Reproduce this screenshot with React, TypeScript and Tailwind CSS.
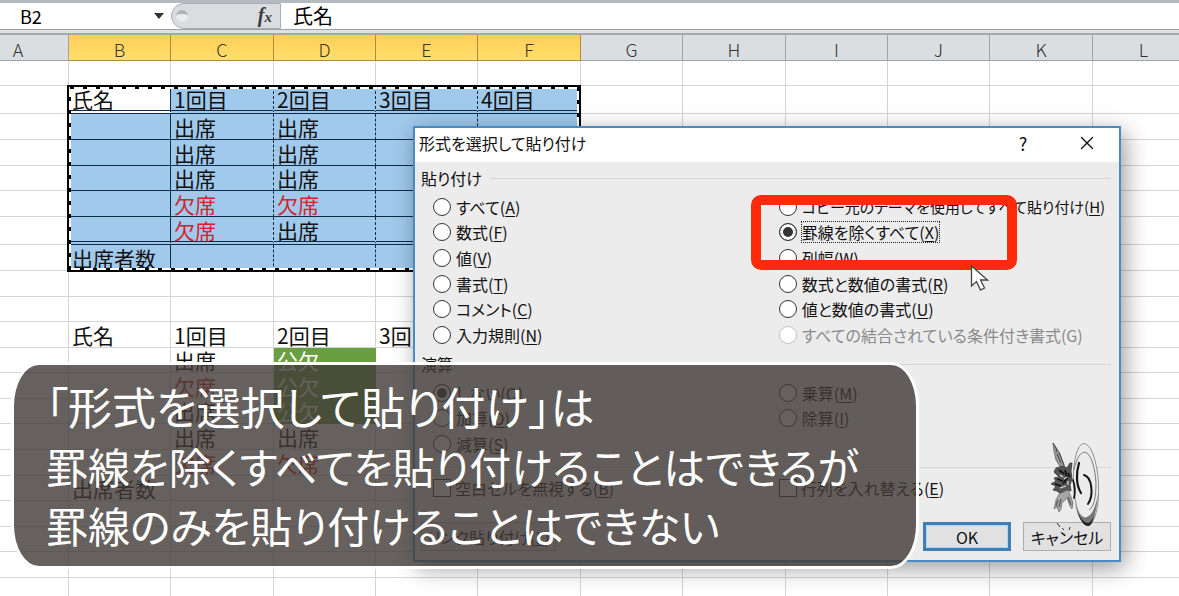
import React, { useState } from 'react';
import { X } from 'lucide-react';

const COLUMNS = ['A', 'B', 'C', 'D', 'E', 'F', 'G', 'H', 'I', 'J', 'K', 'L'];
const COLUMN_WIDTHS = [69, 102, 103, 102, 102, 103, 102, 103, 102, 102, 103, 102];
const SELECTED_COLUMNS = 'BCDEF';

const ROWS: { height: number; cells?: string[] }[] = [
  { height: 25 },
  { height: 28, cells: ['', '氏名', '1回目', '2回目', '3回目', '4回目'] },
  { height: 26, cells: ['', '', '出席', '出席'] },
  { height: 26, cells: ['', '', '出席', '出席'] },
  { height: 25, cells: ['', '', '出席', '出席'] },
  { height: 26, cells: ['', '', '欠席', '欠席'] },
  { height: 28, cells: ['', '', '欠席', '出席'] },
  { height: 26, cells: ['', '出席者数'] },
  { height: 26 },
  { height: 25 },
  { height: 26, cells: ['', '氏名', '1回目', '2回目', '3回目', '4回目'] },
  { height: 25, cells: ['', '', '出席', '公欠'] },
  { height: 26, cells: ['', '', '欠席', '公欠'] },
  { height: 25, cells: ['', '', '出席', '公欠'] },
  { height: 26, cells: ['', '', '出席', '出席'] },
  { height: 26, cells: ['', '', '欠席', '欠席'] },
  { height: 25, cells: ['', '出席者数'] },
  { height: 26 },
  { height: 25 },
  { height: 26 },
  { height: 26 },
];

interface Option {
  label: string;
  accel: string;
  disabled?: boolean;
}

const PASTE_OPTIONS: Option[] = [
  { label: 'すべて', accel: 'A' },
  { label: '数式', accel: 'F' },
  { label: '値', accel: 'V' },
  { label: '書式', accel: 'T' },
  { label: 'コメント', accel: 'C' },
  { label: '入力規則', accel: 'N' },
  { label: 'コピー元のテーマを使用してすべて貼り付け', accel: 'H' },
  { label: '罫線を除くすべて', accel: 'X' },
  { label: '列幅', accel: 'W' },
  { label: '数式と数値の書式', accel: 'R' },
  { label: '値と数値の書式', accel: 'U' },
  { label: 'すべての結合されている条件付き書式', accel: 'G', disabled: true },
];

const OPERATIONS: Option[] = [
  { label: 'しない', accel: 'O' },
  { label: '加算', accel: 'D' },
  { label: '減算', accel: 'S' },
  { label: '乗算', accel: 'M' },
  { label: '除算', accel: 'I' },
];

const cellClass = (row: number, col: number, value: string) => {
  const classes = ['whitespace-nowrap p-0 pl-[3px] align-middle border-r border-b'];
  const inRange = row >= 1 && row <= 7 && col >= 1 && col <= 5;

  if (inRange) {
    classes.push(row === 1 && col === 1 ? 'bg-white' : 'bg-[#a0c9ec]');
    classes.push(row === 1 || row === 6 ? 'pt-0.5 border-b-4 border-b-[#0d2c4a] [border-bottom-style:double]' : 'border-b-[#0d2c4a]');
    classes.push(col === 1 || col === 5 ? 'border-r-[#0d2c4a]' : 'border-r-[#0d2c4a] [border-right-style:dashed]');
  } else if (value === '公欠') {
    classes.push('bg-[#6a9f41] border-[#6a9f41]');
  } else {
    classes.push('border-[#d3d5d7]');
  }

  if (value === '欠席') classes.push('text-[#d8202a]');
  else if (value === '公欠') classes.push('text-white');
  else classes.push('text-[#111]');
  return classes.join(' ');
};

const FormulaBar = () => (
  <div className="flex h-[30px] border-t-[3px] border-b border-t-[#b4babf] border-b-[#9ba0a5] bg-white">
    <div className="flex w-[171px] items-center">
      <input
        aria-label="名前ボックス"
        defaultValue="B2"
        className="min-w-0 flex-1 bg-transparent pl-5 text-[18px] leading-6 outline-none"
      />
      <button aria-label="名前の一覧" className="flex h-full w-6 items-center justify-center">
        <svg width="10" height="6" viewBox="0 0 10 6"><path d="M0 0h10L5 6z" fill="#333" /></svg>
      </button>
    </div>
    <div className="flex w-[110px] items-center justify-between rounded-l-full border border-[#a9aeb3] bg-[#d9dde0] pr-2 pl-1">
      <span className="h-3 w-3 rounded-full border-t-4 border-[#aeb2b5] bg-[#e9ebec]" />
      <button aria-label="関数の挿入" className="font-['Liberation_Serif',serif] text-[20px] leading-5 font-bold text-[#3c3c3c] italic">
        f<span className="text-[15px]">x</span>
      </button>
    </div>
    <input aria-label="数式バー" defaultValue="氏名" className="min-w-0 flex-1 pl-3 text-[20px] leading-6 outline-none" />
  </div>
);

const Sheet = () => (
  <div className="relative">
    <table className="w-[1195px] table-fixed border-separate border-spacing-0 text-[21px] leading-5">
      <colgroup>
        {COLUMN_WIDTHS.map((width, i) => <col key={i} style={{ width }} />)}
      </colgroup>
      <thead>
        <tr className="h-[26px]">
          {COLUMNS.map((name) => (
            <th
              key={name}
              scope="col"
              className={
                SELECTED_COLUMNS.includes(name)
                  ? 'border-r border-b border-[#b08b3a] bg-linear-to-b from-[#ffce58] to-[#ffdf6c] p-0 pt-0.5 text-[18px] font-light text-[#3d3520]'
                  : 'border-r border-b border-[#9da3a8] bg-[#dadee0] p-0 pt-0.5 text-[18px] font-light text-[#333] first:pr-8'
              }
            >
              {name}
            </th>
          ))}
        </tr>
      </thead>
      <tbody>
        {ROWS.map((row, r) => (
          <tr key={r} style={{ height: row.height }}>
            {COLUMNS.map((name, c) => {
              const value = row.cells?.[c] ?? '';
              return <td key={name} className={cellClass(r, c, value)}>{value}</td>;
            })}
          </tr>
        ))}
      </tbody>
    </table>

    {/* Copy marquee around B2:F8 */}
    <svg className="pointer-events-none absolute top-[49px] left-[66px]" width="516" height="189" viewBox="0 0 516 189" fill="none">
      <rect x="2" y="2" width="512" height="185" stroke="#000" strokeWidth="2" />
      <rect x="4" y="4" width="508" height="181" stroke="#fff" strokeWidth="2" />
      <rect x="4" y="4" width="508" height="181" stroke="#000" strokeWidth="2" strokeDasharray="4 9" />
    </svg>
  </div>
);

const OptionLabel: React.FC<{ option: Option }> = ({ option }) => (
  <>
    {option.label}({option.disabled ? option.accel : <u className="underline-offset-2">{option.accel}</u>})
  </>
);

interface RadioGroupProps {
  name: string;
  options: Option[];
  value: string;
  onChange: (value: string) => void;
  className: string;
}

const RadioGroup: React.FC<RadioGroupProps> = ({ name, options, value, onChange, className }) => (
  <div className={`grid grid-flow-col grid-cols-[51%_49%] pl-3 ${className}`}>
    {options.map((option) => (
      <label
        key={option.accel}
        className={`flex items-center gap-1 whitespace-nowrap ${option.disabled ? 'text-[#8a8a8a]' : ''} ${option.label.length > 18 ? 'text-[15px]' : ''}`}
      >
        <input
          type="radio"
          name={name}
          disabled={option.disabled}
          checked={value === option.accel}
          onChange={() => onChange(option.accel)}
          className="h-[18px] w-[18px] shrink-0 appearance-none rounded-full border border-[#333] bg-white checked:bg-[#333] checked:shadow-[inset_0_0_0_3px_#fff] disabled:border-[#c4c4c4]"
        />
        <span className={name === 'paste' && value === option.accel ? 'border border-dotted border-[#222] leading-5' : 'border border-transparent leading-5'}>
          <OptionLabel option={option} />
        </span>
      </label>
    ))}
  </div>
);

const GroupTitle: React.FC<{ children: React.ReactNode }> = ({ children }) => (
  <div className="flex h-8 items-center gap-2">
    <h2>{children}</h2>
    <span className="h-px flex-1 bg-[#d6d6d6]" />
  </div>
);

const CheckOption: React.FC<{ option: Option }> = ({ option }) => (
  <label className="flex items-center gap-1 whitespace-nowrap">
    <input type="checkbox" className="h-[18px] w-[18px] shrink-0 appearance-none border border-[#333] bg-white" />
    <span><OptionLabel option={option} /></span>
  </label>
);

const PasteSpecialDialog = () => {
  const [paste, setPaste] = useState('X');
  const [operation, setOperation] = useState('O');

  return (
    <div
      role="dialog"
      aria-label="形式を選択して貼り付け"
      className="absolute top-[126px] right-[58px] left-[413px] border-2 border-[#4b8bc2] bg-[#ececec] text-[16px] leading-5 text-[#111] shadow-[4px_6px_22px_rgba(0,0,0,0.4)] [font-feature-settings:'palt']"
    >
      <div className="flex h-[34px] items-center bg-white pb-1 pl-1">
        <h1 className="flex-1">形式を選択して貼り付け</h1>
        <button aria-label="ヘルプ" className="w-16 text-[18px]">?</button>
        <button aria-label="閉じる" className="flex w-16 justify-center">
          <X size={22} strokeWidth={1.5} />
        </button>
      </div>

      <div className="pr-2 pb-[9px] pl-[6px]">
        <GroupTitle>貼り付け</GroupTitle>
        <RadioGroup name="paste" options={PASTE_OPTIONS} value={paste} onChange={setPaste} className="h-[154px] grid-rows-6" />
        <GroupTitle>演算</GroupTitle>
        <RadioGroup name="operation" options={OPERATIONS} value={operation} onChange={setOperation} className="h-[77px] grid-rows-3" />
        <div className="mt-[10px] grid h-10 grid-cols-[51%_49%] border-t border-[#d6d6d6] pl-3">
          <CheckOption option={{ label: '空白セルを無視する', accel: 'B' }} />
          <CheckOption option={{ label: '行列を入れ替える', accel: 'E' }} />
        </div>
        <div className="mt-[15px] flex h-[29px] gap-3">
          <button className="w-[135px] border border-[#adadad] bg-[#e1e1e1]">
            リンク貼り付け(<u>L</u>)
          </button>
          <button className="ml-auto w-[88px] border-[3px] border-[#3f7fb6] bg-[#e1e1e1] shadow-[inset_0_0_0_1px_#a9d6f7]">OK</button>
          <button className="w-[88px] border border-[#adadad] bg-[#e1e1e1]">キャンセル</button>
        </div>
      </div>
    </div>
  );
};

const MousePointer = () => (
  <svg className="absolute top-[264px] left-[970px]" width="20" height="28" viewBox="0 0 20 28">
    <path d="M1.500 2v20l5-4.500 4 8.500 4-2-4-8h7z" fill="#fff" stroke="#444" strokeWidth="1.300" />
  </svg>
);

// Winged figure leaning on an upright ring
const Emblem = () => (
  <svg className="absolute top-[442px] left-[1046px]" width="56" height="98" viewBox="0 0 56 98" fill="none">
    <ellipse cx="40" cy="42" rx="12.500" ry="40.500" fill="#ececec" stroke="#888" strokeWidth=".9" transform="rotate(-3 40 42)" />
    <path d="M28 28c3-14 8-20 13-17 5 4 8 16 9 30 0 14-2 24-7 27" stroke="#777" strokeWidth="1" />
    <path d="M29 62c4 10 8 15 12 13 5-2 9-10 11-24-1 18-5 31-9 33-5 1-11-8-14-22z" fill="#777" />
    <path d="M31 69c3 7 7 12 11 12 3-1 5-4 6-8-1 7-3 11-6 11-4 0-8-6-11-15z" fill="#222" />
    <path d="M33 21c-3 10-3 22 2 30" stroke="#151515" strokeWidth="2.200" strokeLinecap="round" />
    <path d="M38 33c8 2 10 20 4 29" stroke="#151515" strokeWidth="2" strokeLinecap="round" />
    <path d="M27 38c2 6 2.500 12 1 18" stroke="#151515" strokeWidth="1.800" strokeLinecap="round" />
    <path d="M7 1l6 9 5 13 2 6-5-3-5-8-2-9z" fill="#9a9a9a" stroke="#555" strokeWidth=".7" />
    <path d="M7 1l3 5 1 4M11 12l4 9M13 10l5 13" stroke="#444" strokeWidth="1" />
    <path d="M10 26l7-2 4 2 3-5h2l-1 8 1 8-2 6 1 6-5-1-5 4-4-3-4-1 3-4-5-2 5-3-2-3 5-1-5-5z" fill="#555" stroke="#333" strokeWidth=".8" />
    <path d="M13 28l5 4M19 28l2 8-4 6M11 37l6 2M9 42l6 2M22 31l2 4" stroke="#111" strokeWidth="1.800" />
    <path d="M14 33l3 2M18 37l3-2M14 46l6-2M22 39v4" stroke="#ddd" strokeWidth="1.200" />
    <path d="M13 52l-3 6-2 9 3-2 2 5 2-3 1-6 5-5 3 8 2 3 1-6-2-6-3-7z" fill="#a5a5a5" stroke="#666" strokeWidth=".7" />
    <path d="M12 58l-2 6M15 57l-2 8M22 55l3 8" stroke="#555" strokeWidth="1.200" />
    <path d="M11 81l3 4M16 86l2 2M24 85l-1 3" stroke="#333" strokeWidth="1" />
  </svg>
);

export default function App() {
  return (
    <div className="relative h-screen overflow-hidden bg-white font-['Noto_Sans_CJK_JP',sans-serif]">
      <FormulaBar />
      <div className="h-[5px] border-b-2 border-[#a3a8ad] bg-[#dfe2e5]" />
      <Sheet />
      <PasteSpecialDialog />

      {/* Highlight frame around the selected option */}
      <div className="pointer-events-none absolute top-[195px] left-[751px] h-[75px] w-[266px] rounded-[10px] border-10 border-[#ff2a0b]" />
      <MousePointer />
      <Emblem />

      <p className="absolute top-[362px] right-[260px] left-[11px] rounded-[28px/44px] border-[3px] border-white bg-[#403a36]/80 py-3 pl-8 text-[42px] leading-[59px] whitespace-nowrap text-white [font-feature-settings:'palt']">
        <span className="text-[44px]">「形式を選択して貼り付け」は</span><br />
        罫線を除くすべてを貼り付けることはできるが<br />
        罫線のみを貼り付けることはできない
      </p>
    </div>
  );
}
